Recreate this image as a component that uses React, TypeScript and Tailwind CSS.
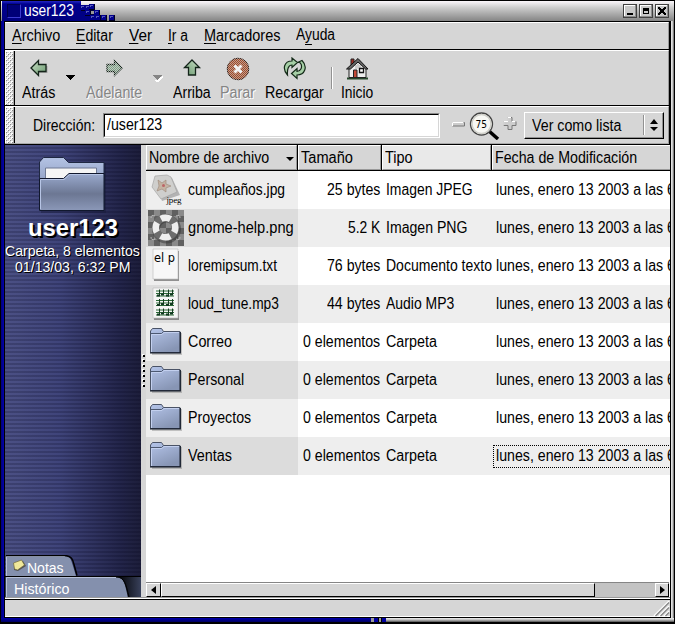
import { useLayoutEffect, useRef, useState } from "react";
import type { ReactNode } from "react";

/* Text run squeezed or stretched horizontally to a fixed advance width. */
function T({ w, className = "", children }: { w: number; className?: string; children: ReactNode }) {
  const ref = useRef<HTMLSpanElement>(null);
  const [scale, setScale] = useState(1);
  useLayoutEffect(() => {
    if (ref.current && ref.current.offsetWidth) setScale(w / ref.current.offsetWidth);
  }, [w]);
  return (
    <span className={`block shrink-0 ${className}`} style={{ width: w }}>
      <span ref={ref} className="inline-block origin-left whitespace-nowrap" style={{ transform: `scaleX(${scale})` }}>
        {children}
      </span>
    </span>
  );
}

const U = ({ children }: { children: ReactNode }) => (
  <span className="underline decoration-1 underline-offset-2">{children}</span>
);

function TitleBar() {
  const cells = [[80, 5], [85, 5], [89, 4], [94, 10], [85, 10], [90, 15], [95, 15], [101, 15], [109, 15]];
  return (
    <div className="flex h-[20px] shrink-0 bg-linear-to-b from-[#fbf7fb] via-[#d0d0d0] via-30% to-[#858585] pl-px">
      <div className="flex h-[20px] w-[79px] shrink-0 bg-linear-to-b from-[#2424c4] via-[#00008f] via-15% to-[#000080] pt-[1px] pl-[5px]">
        <div className="mt-[2px] h-[14px] w-[14px] border border-t-[#00004c] border-l-[#00004c] border-r-[#3c3cd0] border-b-[#3c3cd0] bg-[#000078]" />
        <T w={50} className="ml-[3px] text-white">user123</T>
      </div>
      <svg className="h-[20px] w-[40px] shrink-0" viewBox="81 1 40 20" shapeRendering="crispEdges">
        <path d="M80 5h11v5h4v5h5v6h-20z" fill="#000040" />
        <path d="M80 5h5v6h5v5h5v5h-15z" fill="#000084" />
        {cells.map(([x, y]) => (
          <g key={`${x}-${y}`}>
            <rect x={x} y={y} width="6" height="6" fill="#000020" />
            <rect x={x} y={y} width="5" height="5" fill="#00008c" />
            <path d={`M${x + 1} ${y + 3}v-1.500h3`} fill="none" stroke="#5558b8" />
          </g>
        ))}
        <path d="M91 11h3v3h-3z" fill="#999" />
      </svg>
      <div className="flex-1" />
      <div className="mt-[3px] mr-[5px] flex gap-[2px]">
        {[0, 1, 2].map((i) => (
          <svg key={i} className="h-[14px] w-[14px]" viewBox="0 0 14 14" shapeRendering="crispEdges">
            <path d="M0 0h14v14H0z" fill="#404040" />
            <path d="M1 1h12v12H1z" fill="#8d8d8d" />
            <path d="M1 1h11v11H1z" fill="#fff" />
            <path d="M2 2h10v10H2z" fill="#c9c9c9" />
            {i === 0 && <path d="M4 9h6v2H4z" />}
            {i === 1 && <path d="M4 4h6v6H4zM5 7v2h4V7z" fillRule="evenodd" />}
            {i === 2 && <path d="M3 3h2v1h1v1h2V4h1V3h2v2h-1v1H9v2h1v1h1v2H9v-1H8V9H6v1H5v1H3V9h1V8h1V6H4V5H3z" />}
          </svg>
        ))}
      </div>
    </div>
  );
}

function Grip() {
  return (
    <svg className="h-full w-[10px] shrink-0" shapeRendering="crispEdges">
      <defs>
        <pattern id="grip" width="4" height="4" patternUnits="userSpaceOnUse">
          <path d="M0 0h4v4H0z" fill="#d6d6d6" />
          <path d="M0 0h2v2H0zM2 2h2v2H2z" fill="#fff" />
          <path d="M1 1h1v1H1zM3 3h1v1H3z" fill="#8b8b8b" />
        </pattern>
      </defs>
      <rect x="1" width="8" height="100%" fill="url(#grip)" />
      <path d="M0 0h1v60H0zM0 0h9v1H0z" fill="#fff" />
      <path d="M8 0h1v60H8z" fill="#aaa" />
      <path d="M9 0h1v60H9z" />
    </svg>
  );
}

function Arrow({ dir, dim }: { dir: "left" | "right" | "up"; dim?: boolean }) {
  const rot = dir === "left" ? "" : dir === "right" ? "rotate(180 10 9)" : "rotate(90 10 9)";
  return (
    <svg className="h-[20px] w-[20px]" viewBox="0 0 20 20">
      <defs>
        <linearGradient id="ag" x1="0" y1="0" x2="1" y2="1">
          <stop offset="0" stopColor="#c9dfc5" />
          <stop offset="1" stopColor="#6a9a70" />
        </linearGradient>
        <pattern id="dither" width="2" height="2" patternUnits="userSpaceOnUse">
          <path d="M0 0h1v1H0zM1 1h1v1H1z" fill="#d6d6d6" shapeRendering="crispEdges" />
        </pattern>
      </defs>
      <path d="M3 10.500L10 3v4h8.500v7H10v4z" transform={dir === "left" ? "" : "translate(1 1)"} fill="#777" opacity={dir === "left" ? ".5" : "0"} />
      <path d="M2 9L9.500 1.500V5.500H17v7H9.500v4z" transform={rot} fill={dim ? "#7fa386" : "url(#ag)"} stroke="#14241a" strokeWidth="1.300" />
      {dim && <path d="M0 0h20v20H0z" fill="url(#dither)" opacity=".75" />}
    </svg>
  );
}

function StopIcon() {
  return (
    <svg className="h-[24px] w-[24px]" viewBox="0 0 24 24">
      <circle cx="12" cy="12" r="10.800" fill="#a04a28" stroke="#2d1a13" />
      <path d="M0 0h24v24H0z" fill="url(#dither)" opacity=".6" />
      <path d="M8.500 8.500l7 7m0-7l-7 7" stroke="#f2f2f2" strokeWidth="3" />
    </svg>
  );
}

function ReloadIcon() {
  return (
    <svg className="h-[24px] w-[24px]" viewBox="0 0 24 24">
      <path d="M4.500 18C-1 12 1 4 9 4V1l5.500 4.500L9 10.500V8c-3.500 0-5 4-4.500 10z" fill="#a6cfa6" stroke="#142a18" strokeWidth="1.200" />
      <path d="M19 3.500c6 6 3 14.500-5 14.500v3.500L8.500 16.500l5.500-5v3c3.500 0 5.500-4 4-7.500-.8-2-2-2-3.500-1.500z" fill="#a6cfa6" stroke="#142a18" strokeWidth="1.200" />
    </svg>
  );
}

function HomeIcon() {
  return (
    <svg className="h-[24px] w-[24px]" viewBox="0 0 24 24">
      <path d="M2 21.500h21" stroke="#27482c" strokeWidth="2" />
      <path d="M6 2h3v7H6z" fill="#a02b22" stroke="#222" />
      <path d="M4 11l9-8 8 8v9.500H4z" fill="#eee" stroke="#222" />
      <path d="M13 1.500l10 10.500h-2.500L13 5l-7.500 7H1.500z" fill="#666" stroke="#111" />
      <path d="M11 8v4M13 6.500v5M15 8v3" stroke="#aaa" />
      <path d="M8.500 13h3.500v7.500H8.500z" fill="#c34a38" stroke="#222" />
      <path d="M14.500 11.500h4v4h-4z" fill="#fff" stroke="#111" strokeWidth="1.300" />
    </svg>
  );
}

function Tool({ icon, w, label, dim, ml }: { icon: ReactNode; w: number; label: string; dim?: boolean; ml: string }) {
  return (
    <div className={`flex shrink-0 flex-col items-center ${ml}`}>
      <div className="flex h-[24px] items-center justify-center">{icon}</div>
      <T w={w} className={`mt-[3px] ${dim ? "text-[#858585] [text-shadow:1px_1px_0_#fff]" : ""}`}>{label}</T>
    </div>
  );
}

const Caret = ({ dim }: { dim?: boolean }) => (
  <svg className="mt-[18px] h-[7px] w-[11px] shrink-0" viewBox="0 0 11 7" shapeRendering="crispEdges">
    {dim && <path d="M2 6l4 1 5-5v-1z" fill="#fff" />}
    <path d="M0 0h10L5 5z" fill={dim ? "#858585" : "#000"} />
  </svg>
);

function Toolbar() {
  return (
    <div className="flex h-[55px] shrink-0 border-t border-r border-t-white border-r-[#999]">
      <Grip />
      <div className="flex pt-[6px]">
        <Tool ml="ml-[7px]" w={33} label="Atrás" icon={<Arrow dir="left" />} />
        <div className="ml-[10px]"><Caret /></div>
        <Tool ml="ml-[10px]" w={56} label="Adelante" dim icon={<Arrow dir="right" dim />} />
        <div className="ml-[10px]"><Caret dim /></div>
        <Tool ml="ml-[10px]" w={38} label="Arriba" icon={<Arrow dir="up" />} />
        <Tool ml="ml-[9px]" w={35} label="Parar" dim icon={<StopIcon />} />
        <Tool ml="ml-[10px]" w={59} label="Recargar" icon={<ReloadIcon />} />
        <div className="mt-[10px] ml-[7px] h-[22px] w-[2px] border-l border-[#929292] bg-white" />
        <Tool ml="ml-[8px]" w={32} label="Inicio" icon={<HomeIcon />} />
      </div>
    </div>
  );
}

function LocationBar() {
  return (
    <div className="flex h-[38px] shrink-0 border-t border-r border-b border-t-white border-r-[#999] border-b-[#aaa]">
      <Grip />
      <T w={62} className="mt-[10px] ml-[18px]">Dirección:</T>
      <div className="mt-[6px] ml-[8px] h-[25px] w-[337px] border border-t-[#8a8a8a] border-l-[#8a8a8a] border-r-white border-b-white">
        <div className="h-full border border-t-black border-l-black border-r-[#d6d6d6] border-b-[#d6d6d6] bg-white pl-[2px]">
          <T w={55} className="mt-px">/user123</T>
        </div>
      </div>
      <svg className="mt-[3px] ml-[10px] h-[30px] w-[68px] shrink-0" viewBox="450 110 68 30">
        <path d="M452.500 122.500h12v3.500h-12z" fill="#ccc" stroke="#777" />
        <path d="M452.500 126v-3.500h11" fill="none" stroke="#fff" />
        <path d="M489 131l9 8" stroke="#000" strokeWidth="3.500" />
        <circle cx="481.500" cy="124" r="11" fill="#f8f8f4" stroke="#444" strokeWidth="1.300" />
        <circle cx="481.500" cy="124" r="9.500" fill="none" stroke="#d0d0ca" strokeWidth="1.500" />
        <text x="475.500" y="128" fontSize="11" fontFamily="DejaVu Sans" textLength="11.500" lengthAdjust="spacingAndGlyphs">75</text>
        <path d="M508 117.500h4v4h4v4h-4v4h-4v-4h-4v-4h4z" fill="#ccc" stroke="#777" />
        <path d="M508 121.500v-4h3M504 125v-3.500h4M512 121.500h3.500" fill="none" stroke="#fff" />
      </svg>
      <div className="mt-[5px] ml-[6px] flex h-[27px] w-[140px] shrink-0 border border-t-white border-l-white border-r-black border-b-black">
        <div className="flex w-full border-r border-b border-[#929292]">
          <T w={89} className="mt-[4px] ml-[7px]">Ver como lista</T>
          <div className="mt-[2px] ml-[22px] h-[20px] w-[2px] border-l border-[#929292] bg-white" />
          <svg className="mt-[6px] ml-[5px] h-[13px] w-[8px]" viewBox="0 0 8 13">
            <path d="M4 0l4 5H0zM0 8h8l-4 4z" />
          </svg>
        </div>
      </div>
    </div>
  );
}

function Sidebar() {
  return (
    <div className="flex w-[136px] shrink-0 flex-col bg-[linear-gradient(90deg,#4b5084_0,#3f447a_40%,#23254a_85%,#1d1e3a_100%)]">
      <div className="flex min-h-0 flex-1 flex-col bg-[repeating-linear-gradient(180deg,#00001800_0px,#00001800_2px,#00001830_2px,#00001830_4px)]">
        <svg className="mt-[11px] ml-[32px] h-[58px] w-[70px] shrink-0" viewBox="37 156 70 58">
          <defs>
            <linearGradient id="back" x1="0" y1="0" x2="0" y2="1"><stop stopColor="#b4c3e4" /><stop offset="1" stopColor="#6c7ca4" /></linearGradient>
            <linearGradient id="front" x1="0" y1="0" x2="0" y2="1"><stop stopColor="#9aaace" /><stop offset=".55" stopColor="#6c7793" /><stop offset="1" stopColor="#8b98b8" /></linearGradient>
          </defs>
          <path d="M41 163h65v50H41z" fill="#101330" opacity=".35" />
          <path d="M39.500 209V162l4-4.500h20l5 5h35.500V209z" fill="url(#back)" stroke="#1f2842" />
          <path d="M45.500 168h51v15h-51z" fill="#f5f5f5" stroke="#6e7994" />
          <path d="M39.500 210.500v-32h24l5.500-5h35v37z" fill="url(#front)" stroke="#11182e" />
          <path d="M40.500 209V179.500H64l5.500-5H103" fill="none" stroke="#b7c5e5" />
        </svg>
        <T w={90} className="ml-[23px] text-[23px] leading-[28px] font-bold text-white [text-shadow:2px_2px_0_#000]">user123</T>
        <T w={135} className="mt-px text-[14px] leading-[16px] text-white [text-shadow:1px_1px_0_#000]">Carpeta, 8 elementos</T>
        <T w={115} className="ml-[10px] text-[14px] leading-[16px] text-white [text-shadow:1px_1px_0_#000]">01/13/03, 6:32 PM</T>
        <div className="flex-1" />
        <div className="grid h-[21px] w-[136px] shrink-0">
          <svg className="col-start-1 row-start-1 h-[21px] w-[136px]" viewBox="0 0 136 21">
            <path d="M1 21V1h58c7 0 7 4 9 10l3 10z" fill="#8490ad" />
            <path d="M1.500 21V1.500H60" fill="none" stroke="#b6c0d8" />
            <path d="M1 .5h58c8 0 9 5 10 9l3 11" fill="none" stroke="#000" strokeWidth="1.500" />
            <path d="M9 9l9-3 3 5-8 5-4-1z" fill="#2e2a1e" opacity=".6" />
            <path d="M8.500 8l8-3 3 5-7 5-3-1z" fill="#f0e89a" stroke="#6e683c" strokeWidth=".7" />
          </svg>
          <T w={37} className="col-start-1 row-start-1 mt-[5px] ml-[22px] text-[14px] leading-[16px] text-white">Notas</T>
        </div>
      </div>
      <div className="grid h-[21px] w-[136px] shrink-0 bg-[#303956]">
        <svg className="col-start-1 row-start-1 h-[21px] w-[136px]" viewBox="0 0 136 21">
          <defs><linearGradient id="edge"><stop stopColor="#06070c" /><stop offset="1" stopColor="#39415b" /></linearGradient></defs>
          <path d="M115 0h21v22h-21z" fill="url(#edge)" />
          <path d="M1 22V1h110c8 0 9 7 12 21z" fill="#8490ad" />
          <path d="M1.500 21V1.500H111" fill="none" stroke="#b6c0d8" />
          <path d="M0 .5h136M111 1c9 0 10 8 13 20" fill="none" stroke="#000" />
        </svg>
        <T w={55} className="col-start-1 row-start-1 mt-[5px] ml-[9px] text-[14px] leading-[16px] text-white">Histórico</T>
      </div>
    </div>
  );
}

function FolderIcon() {
  return (
    <svg className="h-[38px] w-[38px]" viewBox="0 0 38 38">
      <defs><linearGradient id="fold" x1="0" y1="0" x2=".5" y2="1"><stop stopColor="#b5c5ea" /><stop offset="1" stopColor="#8795b4" /></linearGradient></defs>
      <path d="M6 10h30v22H6z" fill="#555" opacity=".3" />
      <path d="M4.500 29.500V8l2-2.500h9l2 3h16.500v21z" fill="url(#fold)" stroke="#4a5366" />
      <path d="M5 10.500h10.500l2-2" fill="none" stroke="#4c5871" />
      <path d="M5.500 29V11.500H16l2-2h15" fill="none" stroke="#c3d0ef" />
      <path d="M4 29.800h30.300V9" fill="none" stroke="#171e2c" strokeWidth="1.200" />
    </svg>
  );
}

function JpegIcon() {
  return (
    <svg className="h-[38px] w-[38px]" viewBox="0 0 38 38">
      <path d="M9 8l17-1 8 17-18 6z" fill="#777" opacity=".5" />
      <path d="M9 5l12-1 4 2 6 15-16 7-9-12z" fill="#cfcfcd" stroke="#a5a5a5" strokeWidth=".7" />
      <path d="M12 9l4 3 4-3 0 4 5 2-5 2 0 4-4-3-5 2 2-5z" fill="#c4b3a3" stroke="#9a8777" strokeWidth=".6" />
      <circle cx="17.500" cy="14.500" r="1.500" fill="#b66" />
      <text x="20.500" y="32" fontSize="9" fontFamily="Liberation Serif" textLength="15">jpeg</text>
    </svg>
  );
}

function PngIcon() {
  return (
    <svg className="h-[38px] w-[38px]" viewBox="0 0 38 38">
      <defs>
        <pattern id="chk" width="12" height="12" patternUnits="userSpaceOnUse" x="2" y="1">
          <path d="M0 0h12v12H0z" fill="#8a8a8a" /><path d="M0 0h6v6H0zM6 6h6v6H6z" fill="#606060" />
        </pattern>
      </defs>
      <path d="M2 1h36v36H2z" fill="url(#chk)" />
      <circle cx="20.500" cy="20" r="10.500" fill="none" stroke="#333" strokeWidth="8" opacity=".5" />
      <circle cx="19.500" cy="18.500" r="9.800" fill="none" stroke="#6d6d6d" strokeWidth="7.500" />
      <circle cx="19.500" cy="18.500" r="9.800" fill="none" stroke="#eee" strokeWidth="6.500" strokeDasharray="10 5.390" strokeDashoffset="5" />
      <path d="M9 7q-4-2-4 2M30 7q4-2 4 2M9 30q-4 2-4-2M30 30q4 2 4-2" fill="none" stroke="#bbb" />
    </svg>
  );
}

function TxtIcon() {
  return (
    <svg className="h-[38px] w-[38px]" viewBox="0 0 38 38">
      <path d="M8 4h25v30H8z" fill="#444" opacity=".55" />
      <path d="M7 2h25v30H7z" fill="#f7f7f7" stroke="#bbb" strokeWidth=".6" />
      <text x="8" y="15" fontSize="13" fontFamily="DejaVu Sans" textLength="21" lengthAdjust="spacingAndGlyphs">el p</text>
    </svg>
  );
}

function TuneIcon() {
  return (
    <svg className="h-[38px] w-[38px]" viewBox="0 0 38 38">
      <path d="M8 4h25v31H8z" fill="#444" opacity=".55" />
      <path d="M7 3h25v30H7z" fill="#f5f5f5" stroke="#bbb" strokeWidth=".6" />
      {[4.5, 14, 23.5].map((y) => (
        <g key={y}>
          <path d={`M10 ${y + 1.5}h18M10 ${y + 4}h18M10 ${y + 6.5}h18`} stroke="#286b35" strokeWidth="1" />
          <path d={`M13.500 ${y}v6M17.500 ${y}v5M22.500 ${y}v7M26.500 ${y}v5`} stroke="#173c22" />
          <path d={`M11 ${y + 5}h3v2h-3zM15 ${y + 4}h3v2h-3zM20 ${y + 5}h3v2h-3zM24 ${y + 4}h3v2h-3z`} fill="#113820" />
        </g>
      ))}
    </svg>
  );
}

type Row = { icon: ReactNode; name: string; nw: number; size: string; sw: number; type: string; tw: number };
const rows: Row[] = [
  { icon: <JpegIcon />, name: "cumpleaños.jpg", nw: 97, size: "25 bytes", sw: 53, type: "Imagen JPEG", tw: 87 },
  { icon: <PngIcon />, name: "gnome-help.png", nw: 106, size: "5.2 K", sw: 32, type: "Imagen PNG", tw: 81 },
  { icon: <TxtIcon />, name: "loremipsum.txt", nw: 89, size: "76 bytes", sw: 53, type: "Documento texto", tw: 106 },
  { icon: <TuneIcon />, name: "loud_tune.mp3", nw: 91, size: "44 bytes", sw: 53, type: "Audio MP3", tw: 68 },
  { icon: <FolderIcon />, name: "Correo", nw: 44, size: "0 elementos", sw: 77, type: "Carpeta", tw: 51 },
  { icon: <FolderIcon />, name: "Personal", nw: 56, size: "0 elementos", sw: 77, type: "Carpeta", tw: 51 },
  { icon: <FolderIcon />, name: "Proyectos", nw: 63, size: "0 elementos", sw: 77, type: "Carpeta", tw: 51 },
  { icon: <FolderIcon />, name: "Ventas", nw: 44, size: "0 elementos", sw: 77, type: "Carpeta", tw: 51 },
];

function Head({ cls, w, label, sort }: { cls: string; w: number; label: string; sort?: boolean }) {
  return (
    <div className={`flex h-[26px] shrink-0 border-r border-b border-black ${cls}`}>
      <div className="flex w-full border border-t-white border-l-white border-r-[#999] border-b-[#999] pt-[3px] pl-[2px]">
        <T w={w}>{label}</T>
        {sort && (
          <svg className="mt-[8px] ml-[17px] h-[5px] w-[8px]" viewBox="0 0 8 5"><path d="M0 0h8L4 4z" /></svg>
        )}
      </div>
    </div>
  );
}

function FileList() {
  return (
    <div className="flex min-w-0 flex-1 flex-col overflow-hidden bg-white">
      <div className="flex shrink-0">
        <Head cls="w-[152px] bg-[#d6d6d6]" w={120} label="Nombre de archivo" sort />
        <Head cls="w-[84px] bg-[#d6d6d6]" w={52} label="Tamaño" />
        <Head cls="w-[110px] bg-[#e9e9e9]" w={28} label="Tipo" />
        <Head cls="w-[200px] bg-[#d6d6d6]" w={142} label="Fecha de Modificación" />
      </div>
      {rows.map((r, i) => (
        <div key={r.name} className={`flex h-[38px] shrink-0 ${i % 2 ? "bg-[#eeeeee]" : "bg-white"}`}>
          <div className={`flex w-[152px] shrink-0 ${i % 2 ? "bg-[#dcdcdc]" : "bg-[#eeeeee]"}`}>
            {r.icon}
            <T w={r.nw} className="mt-[10px] ml-[4px]">{r.name}</T>
          </div>
          <div className="flex w-[82px] shrink-0 justify-end pt-[10px]"><T w={r.sw}>{r.size}</T></div>
          <div className="flex w-[113px] shrink-0 pt-[10px] pl-[6px]"><T w={r.tw}>{r.type}</T></div>
          <div className={`mt-[8px] flex h-[23px] w-[190px] shrink-0 border border-dotted pt-px pl-[2px] ${i === 7 ? "border-black" : "border-transparent"}`}>
            <T w={179}>lunes, enero 13 2003 a las 6</T>
          </div>
        </div>
      ))}
      <div className="flex-1" />
      <div className="flex h-[15px] w-[523px] shrink-0 border-t border-[#858585] bg-[#c3c3c3]">
        <div className="flex w-[15px] items-center justify-center border border-t-white border-l-white border-r-black border-b-black bg-[#d6d6d6]">
          <svg className="h-[8px] w-[5px]" viewBox="0 0 5 8"><path d="M5 0v8L0 4z" /></svg>
        </div>
        <div className="w-[434px] border border-t-white border-l-white border-r-black border-b-black bg-[#d6d6d6]" />
        <div className="flex-1" />
        <div className="flex w-[14px] items-center justify-center border border-t-white border-l-white border-r-black border-b-black bg-[#d6d6d6]">
          <svg className="h-[8px] w-[5px]" viewBox="0 0 5 8"><path d="M0 0v8l5-4z" /></svg>
        </div>
      </div>
    </div>
  );
}

export default function App() {
  return (
    <div className="flex h-[624px] w-[675px] flex-col overflow-hidden border border-black bg-black font-['Liberation_Sans',Arial,sans-serif] text-[16px] leading-[18px] text-black">
      <TitleBar />
      <div className="flex h-[597px] shrink-0">
        <div className="w-[4px] shrink-0 border-r border-black bg-linear-to-r from-[#000078] to-[#0000b0]" />
        <div className="flex w-[666px] shrink-0 flex-col border-t border-r border-b border-black bg-[#d6d6d6]">
          <div className="shrink-0 bg-black pr-px">
            <div className="flex flex-col bg-[#d6d6d6]">
              <div className="flex h-[27px] shrink-0 border-t border-r border-t-white border-r-[#999] pt-[4px]">
                <T w={48} className="ml-[7px]"><U>A</U>rchivo</T>
                <T w={37} className="ml-[16px]"><U>E</U>ditar</T>
                <T w={23} className="ml-[16px]"><U>V</U>er</T>
                <T w={20} className="ml-[16px]"><U>I</U>r a</T>
                <T w={76} className="ml-[16px]"><U>M</U>arcadores</T>
                <T w={39} className="-mt-px ml-[16px]">A<span className="underline decoration-1 underline-offset-4 [text-decoration-skip-ink:none]">y</span>uda</T>
              </div>
              <div className="h-px shrink-0 bg-black" />
              <Toolbar />
              <div className="h-px shrink-0 bg-black" />
              <LocationBar />
            </div>
          </div>
          <div className="h-px shrink-0 bg-black" />
          <div className="flex h-[452px] shrink-0">
            <Sidebar />
            <div className="flex w-[5px] shrink-0 items-center">
              <svg className="h-[36px] w-[5px]" viewBox="0 0 5 36" shapeRendering="crispEdges">
                {[0, 5, 10, 15, 20, 25, 30].map((y) => (
                  <g key={y}><path d={`M1 ${y + 1}h2v2H1z`} fill="#fff" /><path d={`M2 ${y + 2}h2v2H2z`} /></g>
                ))}
              </svg>
            </div>
            <FileList />
          </div>
          <div className="h-[2px] shrink-0 border-t border-t-[#999] bg-white" />
          <div className="flex min-h-0 flex-1 justify-end border-t border-b border-t-black border-b-white">
            <svg className="h-[17px] w-[17px]" viewBox="0 0 17 17">
              <path d="M1 16L16 1M6 16L16 6M11 16l5-5" stroke="#fff" strokeWidth="1.500" />
              <path d="M2.500 16L16 2.500M7.500 16L16 7.500M12.500 16l3.500-3.500" stroke="#888" strokeWidth="1.300" />
            </svg>
          </div>
        </div>
        <div className="w-[3px] shrink-0 bg-linear-to-r from-[#f0f0f0] via-[#c8c8c8] to-[#606060]" />
      </div>
      <div className="flex h-[4px] shrink-0">
        <div className="w-[370px] bg-linear-to-b from-[#0000b0] to-[#000060]" />
        <div className="w-[3px] bg-[#999]" />
        <div className="w-[4px] bg-[#0000a0]" />
        <div className="w-[4px] border-x border-black bg-[#999]" />
        <div className="w-[4px] bg-[#0000a0]" />
        <div className="flex-1 bg-linear-to-b from-[#f0f0f0] via-[#b8b8b8] to-[#505050]" />
      </div>
    </div>
  );
}
